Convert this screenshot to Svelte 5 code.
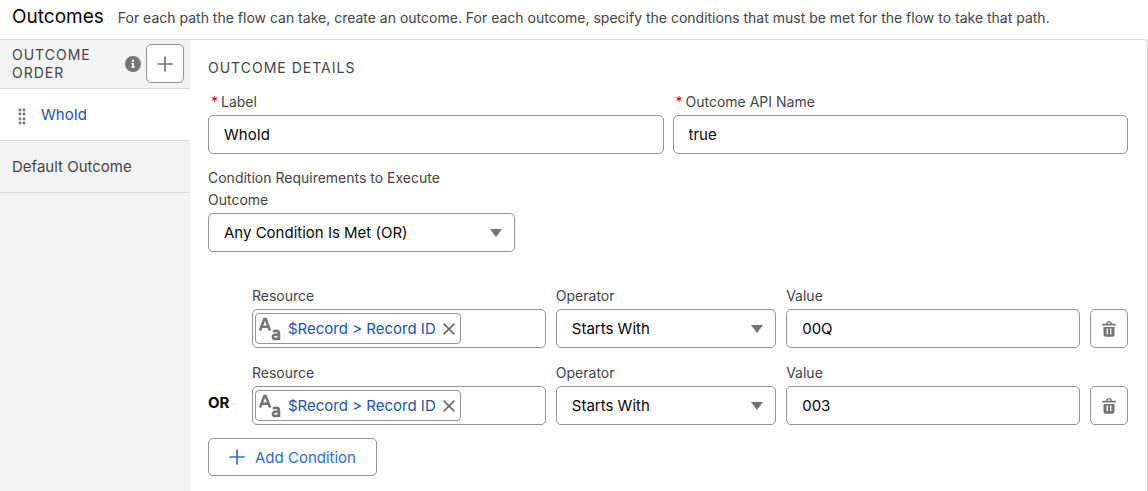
<script lang="ts">
  interface Condition {
    resource: string;
    operator: string;
    value: string;
  }

  let label = $state("WhoId");
  let apiName = $state("true");
  let logic = $state("Any Condition Is Met (OR)");

  let conditions = $state<Condition[]>([
    { resource: "$Record > Record ID", operator: "Starts With", value: "00Q" },
    { resource: "$Record > Record ID", operator: "Starts With", value: "003" },
  ]);

  const LOGIC_OPTIONS = ["All Conditions Are Met (AND)", "Any Condition Is Met (OR)"];
  const OPERATORS = ["Equals", "Starts With", "Ends With", "Contains"];

  function addCondition() {
    conditions.push({ resource: "", operator: "Equals", value: "" });
  }

  function removeCondition(index: number) {
    conditions.splice(index, 1);
  }
</script>

{#snippet plus()}
  <svg class="plus" viewBox="0 0 16 16" aria-hidden="true">
    <path d="M8 1v14M1 8h14" />
  </svg>
{/snippet}

<header class="page-header">
  <h1>Outcomes</h1>
  <p>
    For each path the flow can take, create an outcome. For each outcome, specify the conditions
    that must be met for the flow to take that path.
  </p>
</header>

<div class="editor">
  <aside class="sidebar">
    <div class="order-header">
      <h2>Outcome Order</h2>
      <svg class="info" viewBox="0 0 16 16" role="img" aria-label="Help">
        <circle cx="8" cy="8" r="8" fill="#747474" />
        <circle cx="8" cy="4.8" r="1.2" fill="#fff" />
        <path d="M6.3 7h2.6v3.6h1v1.2H6.2v-1.2h1V8.2h-.9z" fill="#fff" />
      </svg>
      <button class="icon-btn" aria-label="Add outcome">{@render plus()}</button>
    </div>
    <ul>
      <li class="active">
        <svg class="grip" viewBox="0 0 8 17" aria-hidden="true">
          {#each [2, 6, 11, 15] as y}
            <circle cx="2" cy={y} r="1.4" />
            <circle cx="6" cy={y} r="1.4" />
          {/each}
        </svg>
        <a href="#whoid">{label}</a>
      </li>
      <li><a href="#default">Default Outcome</a></li>
    </ul>
  </aside>

  <main class="details">
    <h2>Outcome Details</h2>

    <div class="names">
      <div class="field">
        <label class="required" for="label">Label</label>
        <input id="label" required bind:value={label} />
      </div>
      <div class="field">
        <label class="required" for="api-name">Outcome API Name</label>
        <input id="api-name" required bind:value={apiName} />
      </div>
    </div>

    <div class="field logic">
      <label for="logic">Condition Requirements to Execute<br />Outcome</label>
      <select id="logic" bind:value={logic}>
        {#each LOGIC_OPTIONS as option}
          <option>{option}</option>
        {/each}
      </select>
    </div>

    <div class="conditions">
      {#each conditions as condition, i}
        <div class="condition">
          <span class="joiner">{i > 0 ? "OR" : ""}</span>
          <div class="field">
            <label for="resource-{i}">Resource</label>
            <div class="lookup">
              {#if condition.resource}
                <span class="pill">
                  <svg class="text-type" viewBox="0 0 24 24" aria-hidden="true">
                    <path d="M2 13.500 6.300 2h1.400L12 13.500M3.800 9.800h6.400" />
                    <path d="M15 14.700c1-.7 2-1 3.100-1 2 0 2.900.9 2.900 2.700V23M21 17.600h-2.300c-2.500 0-3.800.7-3.800 2.300 0 1.400 1 2.200 2.500 2.200 2.200 0 3.600-1.200 3.600-3.200" />
                  </svg>
                  <span>{condition.resource}</span>
                  <button aria-label="Clear resource" onclick={() => (condition.resource = "")}>
                    <svg viewBox="0 0 12 12" aria-hidden="true"><path d="M.6.6l10.800 10.800M11.400.6L.6 11.400" /></svg>
                  </button>
                </span>
              {/if}
              <input id="resource-{i}" />
            </div>
          </div>
          <div class="field">
            <label for="operator-{i}">Operator</label>
            <select id="operator-{i}" bind:value={condition.operator}>
              {#each OPERATORS as operator}
                <option>{operator}</option>
              {/each}
            </select>
          </div>
          <div class="field">
            <label for="value-{i}">Value</label>
            <input id="value-{i}" bind:value={condition.value} />
          </div>
          <button class="icon-btn" aria-label="Delete condition" onclick={() => removeCondition(i)}>
            <svg class="trash" viewBox="0 0 14 16" aria-hidden="true">
              <path d="M5 3V2c0-.7.4-1.100 1.100-1.100h1.800C8.600.9 9 1.300 9 2v1" fill="none" stroke="#747474" stroke-width="1.400" />
              <rect y="2.700" width="14" height="1.700" rx=".8" />
              <path fill-rule="evenodd" d="M1.500 6h11v7.800c0 1.100-.8 1.900-1.900 1.900H3.400c-1.100 0-1.900-.8-1.900-1.900zM4.600 7.500v5.800H6V7.500zM8 7.500v5.800h1.400V7.500z" />
            </svg>
          </button>
        </div>
      {/each}
    </div>

    <button class="add-btn" onclick={addCondition}>
      {@render plus()}
      Add Condition
    </button>
  </main>
</div>

<style>
  :global(body) {
    margin: 0;
    background: #fff;
    font-family: Inter, "Liberation Sans", sans-serif;
    font-size: 14px;
    color: #444;
  }

  :global(#app) {
    display: flex;
    flex-direction: column;
    min-height: 100vh;
  }

  h1,
  h2,
  p,
  ul {
    margin: 0;
    padding: 0;
    font-weight: 400;
  }

  .page-header {
    display: flex;
    align-items: baseline;
    gap: 14px;
    padding: 4px 12px 9px;
  }

  h1 {
    font-size: 19px;
    line-height: 26px;
    color: #080707;
  }

  h2 {
    font-size: 14px;
    line-height: 18px;
    letter-spacing: 1px;
    text-transform: uppercase;
  }

  .editor {
    flex: 1;
    display: grid;
    grid-template-columns: 190px 1fr;
    border: 1px solid #d8d8d8;
    border-width: 1px 1px 0 0;
    border-top-right-radius: 4px;
  }

  .sidebar {
    background: #f3f3f3;
  }

  .order-header {
    display: flex;
    align-items: center;
    padding: 4px 6px 5px 12px;
    border-bottom: 1px solid #d8d8d8;
  }

  .order-header h2 {
    flex: 1;
  }

  .info {
    width: 16px;
    height: 16px;
    margin-right: 5px;
  }

  ul {
    list-style: none;
  }

  li {
    display: flex;
    align-items: center;
    gap: 15px;
    height: 51px;
    padding: 0 12px;
    border-bottom: 1px solid #d8d8d8;
    font-size: 15px;
  }

  li a {
    color: #444;
    text-decoration: none;
  }

  .active {
    padding-left: 18px;
    background: #fff;
  }

  .active a {
    color: #1b55b0;
  }

  .grip {
    width: 8px;
    height: 17px;
    margin-top: 3px;
    fill: #747474;
  }

  .details {
    padding: 19px 19px 15px 18px;
  }

  .names {
    display: grid;
    grid-template-columns: 1fr 1fr;
    gap: 9px;
    margin: 14px 0 13px;
  }

  .field {
    display: flex;
    flex-direction: column;
    gap: 2px;
    min-width: 0;
  }

  label {
    line-height: 22px;
  }

  .required::before {
    content: "*";
    margin: 0 3px;
    color: #ba0517;
  }

  input,
  select,
  .lookup,
  .icon-btn,
  .add-btn {
    box-sizing: border-box;
    height: 39px;
    border: 1px solid #939393;
    border-radius: 5px;
    background: #fff;
  }

  input,
  select {
    width: 100%;
    padding: 0 15px;
    font: inherit;
    font-size: 15px;
    color: #080707;
  }

  select {
    appearance: none;
    background: #fff url("data:image/svg+xml,%3Csvg xmlns='http://www.w3.org/2000/svg' width='12' height='8'%3E%3Cpath d='M0 0h12L6 8z' fill='%23747474'/%3E%3C/svg%3E") no-repeat right 12px center;
  }

  .logic {
    width: 307px;
  }

  .conditions {
    display: grid;
    gap: 14px;
    margin: 33px 0 13px;
  }

  .condition {
    display: grid;
    grid-template-columns: 34px 4fr 3fr 4fr 38px;
    gap: 10px;
    align-items: end;
  }

  .joiner {
    line-height: 44px;
    font-size: 15px;
    font-weight: 700;
    color: #080707;
  }

  .lookup {
    display: flex;
    align-items: center;
    padding: 0 2px;
  }

  .lookup input {
    flex: 1;
    min-width: 0;
    height: 31px;
    border: 0;
    outline: 0;
  }

  .pill {
    display: flex;
    flex: none;
    align-items: center;
    box-sizing: border-box;
    height: 31px;
    padding: 0 5px 0 2px;
    border: 1px solid #939393;
    border-radius: 4px;
    font-size: 15px;
    color: #1b55b0;
  }

  .pill button {
    display: flex;
    margin-left: 7px;
    padding: 0;
    border: 0;
    background: none;
  }

  .pill button svg {
    width: 12px;
    height: 12px;
    stroke: #666;
    stroke-width: 1.5;
  }

  .text-type {
    width: 24px;
    height: 24px;
    margin-right: 6px;
    fill: none;
    stroke: #747474;
    stroke-width: 2.5;
  }

  .plus {
    width: 16px;
    height: 16px;
    fill: none;
    stroke: currentColor;
    stroke-width: 1.7;
    stroke-linecap: round;
  }

  .icon-btn {
    display: flex;
    align-items: center;
    justify-content: center;
    width: 38px;
    padding: 0;
    color: #747474;
  }

  .trash {
    width: 14px;
    height: 16px;
    fill: #747474;
  }

  .add-btn {
    display: flex;
    align-items: center;
    gap: 10px;
    height: 38px;
    padding: 0 20px;
    font: inherit;
    font-size: 15px;
    color: #2a70d0;
  }
</style>
